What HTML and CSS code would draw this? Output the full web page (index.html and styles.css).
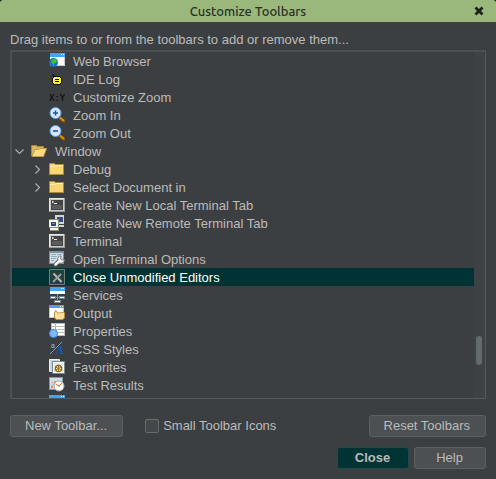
FILE: index.html
```
<!DOCTYPE html>
<html lang="en">
<head>
<meta charset="utf-8">
<title>Customize Toolbars</title>
<link rel="stylesheet" href="styles.css">
</head>
<body>
<svg class="defs" aria-hidden="true">
  <symbol id="folder" viewBox="0 0 16 16"><path d="M.5 13.5v-11h5l1 1h8v10z" fill="#f9d675" stroke="#b0893b"/><path d="M1 5.5h5l1-1h7" fill="none" stroke="#fff0ad"/></symbol>
  <symbol id="terminal" viewBox="0 0 16 16"><path d="M0 1h16v14H0z" fill="#9a9a9a"/><path d="M0 1h15v13H0z" fill="#e8e8e8"/><path d="M1 2h14v12H1z" fill="#c8c8c8"/><path d="M2 3h12v10H2z" fill="#444"/><path d="M3 8h10v4H3z" fill="#5b5b5b"/><path d="M3 4l1.500 1L3 6M5 6.500h3" fill="none" stroke="#fff" stroke-width=".9"/></symbol>
  <symbol id="lens" viewBox="0 0 16 16"><path d="M11 11l4 3" stroke="#8c5700" stroke-width="3" stroke-linecap="round"/><path d="M11 10.500l4 3.500" stroke="#d9910d" stroke-width="1.800"/><circle cx="6.500" cy="6" r="5.500" fill="#d5e8ff" stroke="#5c9fe0"/></symbol>
  <symbol id="expanded" viewBox="0 0 9 9"><path d="M.5 2.500l4 4 4-4" fill="none" stroke="#adadad" stroke-width="1.200"/></symbol>
  <symbol id="collapsed" viewBox="0 0 9 9"><path d="M2.500.5l4 4-4 4" fill="none" stroke="#adadad" stroke-width="1.200"/></symbol>
</svg>
<header class="titlebar">
  <h1>Customize Toolbars</h1>
  <button class="dismiss" type="button" aria-label="Close window"><svg viewBox="0 0 10 10"><path d="M1.500 1.500l7 7m0-7l-7 7" stroke="#1c211c" stroke-width="2.800"/></svg></button>
</header>
<main class="dialog">
  <p class="hint">Drag items to or from the toolbars to add or remove them...</p>
  <div class="list">
    <ul class="tree">
      <li class="row child"><svg class="icon" viewBox="0 0 16 16"><path d="M1 0h15v13H1z" fill="#fff"/><path d="M1 0h15v4H1z" fill="#41a5f5"/><path d="M12 1h1v1h-1zM14 1h1v1h-1z" fill="#fff"/><path d="M15.500 4v8.500H8" fill="none" stroke="#ccc"/><circle cx="4.500" cy="9.500" r="4.500" fill="#1672c4"/><path d="M3 6.500l3-1 2 2-1 2-2 1-.5 2.500-1-2.500L2 9z" fill="#36c83a"/></svg>Web Browser</li>
      <li class="row child"><svg class="icon" viewBox="0 0 16 16"><path d="M3 3h2v1h1v1h5v1h1v1h1v5h-1v1h-1v1H5v-1H4v-1H3V7h1V6z" fill="#111"/><path d="M5 6h6v1h1v5h-1v1H5v-1H4V7h1z" fill="#fff23b"/><path d="M6 8.500h4M6 10.500h4" stroke="#111"/><path d="M5 7h1v1H5z" fill="#fff"/></svg>IDE Log</li>
      <li class="row child"><svg class="icon" viewBox="0 0 16 16"><text class="glyph-xy" x="0" y="12">X:Y</text></svg>Customize Zoom</li>
      <li class="row child"><svg class="icon" viewBox="0 0 16 16"><use href="#lens"/><path d="M4 6h5M6.500 3.500v5" stroke="#2550a8" stroke-width="1.600"/></svg>Zoom In</li>
      <li class="row child"><svg class="icon" viewBox="0 0 16 16"><use href="#lens"/><path d="M4 6h5" stroke="#2550a8" stroke-width="1.600"/></svg>Zoom Out</li>
      <li class="row parent"><span class="toggle"><svg><use href="#expanded"/></svg></span><svg class="icon" viewBox="0 0 16 16"><path d="M.5 13V2.500h5l1 1h6V6" fill="#d8b55c" stroke="#b0893b"/><path d="M1 13.500L4 6.500h4l1-1h6.500l-3 8z" fill="#fbdc81" stroke="#c79d48"/></svg>Window</li>
      <li class="row child branch"><span class="toggle"><svg><use href="#collapsed"/></svg></span><svg class="icon"><use href="#folder"/></svg>Debug</li>
      <li class="row child branch"><span class="toggle"><svg><use href="#collapsed"/></svg></span><svg class="icon"><use href="#folder"/></svg>Select Document in</li>
      <li class="row child"><svg class="icon"><use href="#terminal"/></svg>Create New Local Terminal Tab</li>
      <li class="row child"><svg class="icon" viewBox="0 0 16 16"><path d="M6 0h9v9H6zM7 10h8v2H7z" fill="#d6d6cc"/><path d="M8 2h6v5H8z" fill="#344d86"/><path d="M0 4h10v9H0zM1 13h9v3H1z" fill="#8b8b86"/><path d="M0 5h9v7H0zM1 13h8v2H1z" fill="#f4f3e8"/><path d="M2 7h5v4H2z" fill="#2f4779"/><path d="M3 8h3v1H3z" fill="#6c83b0"/></svg>Create New Remote Terminal Tab</li>
      <li class="row child"><svg class="icon"><use href="#terminal"/></svg>Terminal</li>
      <li class="row child"><svg class="icon" viewBox="0 0 16 16"><path d="M0 0h15v13H0z" fill="#7a919f"/><path d="M1 2h13v10H1z" fill="#cfdde5"/><path d="M2 3.500h5M8 3.500h5M2 5.500h6M2 7.500h5M2 9.500h3" stroke="#94abb9"/><path d="M6.500 13.500l4-4" stroke="#5d6468" stroke-width="4" stroke-linecap="round"/><path d="M9 9q-1-4 3-4l-.5 3 1 1 3-.5q0 4-4 4z" fill="#f6f6f6" stroke="#5d6468" stroke-width=".8"/><path d="M6.500 13.500l4.500-4" stroke="#f6f6f6" stroke-width="2.400" stroke-linecap="round"/></svg>Open Terminal Options</li>
      <li class="row child selected" aria-selected="true"><svg class="icon" viewBox="0 0 16 16"><path d="M.5.5h15v15H.5z" fill="#22403e" stroke="#757d7a"/><path d="M4.500 4.500l8 8.500" stroke="#b8b8b8" stroke-width="2"/><path d="M12 5l-8 8" stroke="#98a09d" stroke-width="1.800"/></svg>Close Unmodified Editors</li>
      <li class="row child"><svg class="icon" viewBox="0 0 16 16"><path d="M1 0h15v7H1z" fill="#fff"/><path d="M1 0h15v4H1z" fill="#41a5f5"/><path d="M12 1h1v1h-1zM14 1h1v1h-1z" fill="#fff"/><path d="M8.500 7v6M6 10.500h5" stroke="#8496a0"/><path d="M1 9h6v3H1zM10 9h6v3h-6zM5 13h7v3H5z" fill="#708590"/><path d="M2 10h4v1H2zM11 10h4v1h-4zM6 14h5v1H6z" fill="#fff"/></svg>Services</li>
      <li class="row child"><svg class="icon" viewBox="0 0 16 16"><path d="M0 0h15v13H0z" fill="#bfc6ca"/><path d="M1 3h13v9H1z" fill="#fff"/><path d="M0 0h15v3H0z" fill="#4d9ff0"/><path d="M11 1h1v1h-1zM13 1h1v1h-1z" fill="#fff"/><path d="M5.500 13v-5l1-2.500 1 .5 1 2h2l1-1 1 1 2-1 1 1v5l-2 1.500h-6z" fill="#ffe09b" stroke="#bb8d46"/></svg>Output</li>
      <li class="row child"><svg class="icon" viewBox="0 0 16 16"><path d="M2 0h14v13H2z" fill="#bcbcbc"/><path d="M3 1h12v11H3z" fill="#fff"/><path d="M3 3.500h12M3 6.500h12M3 9.500h12M6.500 1v11" stroke="#b8b8b8"/><circle cx="4.500" cy="10.500" r="4" fill="#7cbafc" stroke="#4388dc"/></svg>Properties</li>
      <li class="row child"><svg class="icon" viewBox="0 0 16 16"><text class="glyph-a" x="2" y="7">a</text><path d="M1 13L13 1" stroke="#6c9dcc"/><text class="glyph-style" x="7" y="13">A</text></svg>CSS Styles</li>
      <li class="row child"><svg class="icon" viewBox="0 0 16 16"><path d="M.5.5h10v12H.5z" fill="#c9d6dd" stroke="#eee"/><path d="M3.500 2.500h12v12h-12z" fill="#fff" stroke="#7b858b"/><path d="M5 4h9v9H5z" fill="#dce8ef"/><circle cx="9.500" cy="9.500" r="3.200" fill="#fff1a5" stroke="#8a6010" stroke-width="1.200"/><path d="M9.500 6v7M6.500 8l6 3m0-3l-6 3" stroke="#926611" stroke-width=".9"/></svg>Favorites</li>
      <li class="row child"><svg class="icon" viewBox="0 0 16 16"><path d="M0 0h14v13H0z" fill="#8599a6"/><path d="M1 1h12v11H1z" fill="#cfdde5"/><path d="M2 9h2V7h2V5h2" fill="none" stroke="#abbcc7"/><path d="M2 9h2v2H2zM5 4h2v2H5zM3 5h1v1H3z" fill="#f28b4b"/><circle cx="10" cy="9" r="5" fill="#fff" stroke="#a5aab0"/><path d="M10 9L6.500 7M10 9l3-3" stroke="#ed792d"/><path d="M9.500 8.500h1v1h-1z" fill="#55585a"/></svg>Test Results</li>
      <li class="row child" aria-hidden="true"><svg class="icon" viewBox="0 0 16 16"><path d="M0 1h16v12H0z" fill="#fff"/><path d="M0 0h16v4H0z" fill="#41a5f5"/><path d="M12 1h1v1h-1zM14 1h1v1h-1z" fill="#fff"/></svg></li>
    </ul>
    <div class="scrollbar"><span class="thumb"></span></div>
  </div>
  <div class="options">
    <button class="btn" type="button">New Toolbar...</button>
    <label class="check"><input type="checkbox">Small Toolbar Icons</label>
    <button class="btn reset" type="button">Reset Toolbars</button>
  </div>
  <footer class="actions">
    <button class="btn primary" type="button">Close</button>
    <button class="btn" type="button">Help</button>
  </footer>
</main>
</body>
</html>
```

FILE: styles.css
```
* { box-sizing: border-box; }

html { background: #10140e; }

body {
  margin: 0;
  height: 100vh;
  display: flex;
  flex-direction: column;
  overflow: hidden;
  color: #bbb;
  font: 13px/18px "Liberation Sans", Arial, sans-serif;
}

.defs { position: absolute; width: 0; height: 0; }

.titlebar {
  display: grid;
  grid-template-columns: 1fr auto 1fr;
  align-items: center;
  height: 22px;
  flex: none;
  padding: 0 12px;
  background: #9ab87c;
  border-radius: 3px 3px 0 0;
}

h1 {
  grid-column: 2;
  margin: 0;
  color: #2b3027;
  font: 500 13px/22px Ubuntu, "Noto Sans", sans-serif;
}

.dismiss {
  justify-self: end;
  width: 10px;
  height: 10px;
  padding: 0;
  border: 0;
  background: none;
}

.dismiss svg { display: block; width: 10px; height: 10px; }

.dialog {
  flex: 1;
  min-height: 0;
  display: flex;
  flex-direction: column;
  padding: 9px 10px 10px;
  background: #3c3f41;
}

.hint { margin: 0 0 1px; }

.list {
  flex: 1;
  min-height: 0;
  display: flex;
  overflow: hidden;
  border: 1px solid #555859;
  border-top: 2px solid #4c5052;
  border-left: 2px solid #4c5052;
}

.tree {
  flex: 1;
  margin: 0;
  padding: 0;
  list-style: none;
}

.row {
  display: flex;
  align-items: flex-start;
  gap: 8px;
  height: 18px;
  line-height: 20px;
  white-space: nowrap;
}

.child { padding-left: 37px; }
.parent { padding-left: 1px; gap: 0; }
.branch { padding-left: 19px; gap: 0; }
.parent .icon, .branch .icon { margin-right: 8px; }
.selected { background: #033; color: #fff; }

.icon { width: 16px; height: 16px; margin-top: 1px; flex: none; }

.toggle { width: 18px; padding: 5px 0 0 2px; }
.toggle svg { display: block; width: 9px; height: 9px; }

.glyph-xy { font: 9px "DejaVu Sans Mono", monospace; fill: #000; }
.glyph-a { font: 7px "Liberation Sans", sans-serif; fill: #8fc2f4; }
.glyph-style { font: italic bold 12px "Liberation Serif", serif; fill: #0b5ec4; }

.scrollbar {
  position: relative;
  width: 11px;
  background: #3f4244;
}

.thumb {
  position: absolute;
  left: 2px;
  top: 82%;
  width: 6px;
  height: 29px;
  border-radius: 3px;
  background: #616b6d;
}

.options {
  display: flex;
  align-items: center;
  margin-top: 16px;
}

.btn {
  height: 22px;
  min-width: 72px;
  padding: 0 15px 0 14px;
  border: 1px solid #5e6060;
  border-radius: 3px;
  background: #4c5052;
  color: #bbb;
  font: inherit;
}

.primary {
  background: #033;
  border-color: #1f4b4a;
  font-weight: bold;
}

.check {
  display: flex;
  align-items: center;
  gap: 4px;
  margin-left: 22px;
}

.check input {
  appearance: none;
  width: 14px;
  height: 14px;
  margin: 0;
  border: 1px solid #6b6b6b;
  border-radius: 2px;
  background: #43494a;
}

.reset { margin-left: auto; }

.actions {
  display: flex;
  justify-content: flex-end;
  gap: 5px;
  margin-top: 10px;
}
```
